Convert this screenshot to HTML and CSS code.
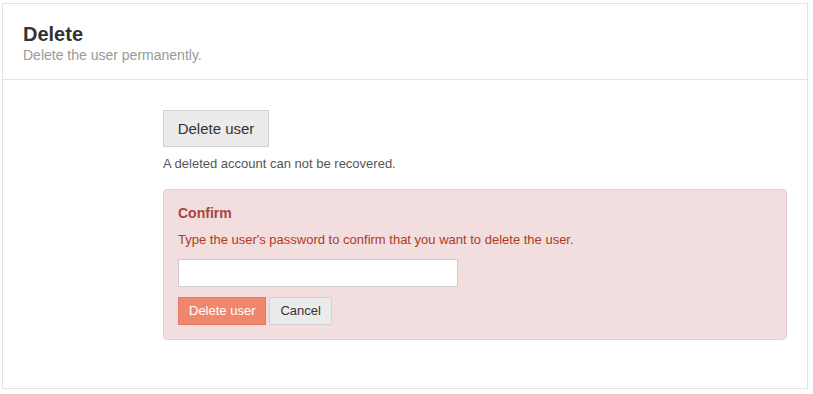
FILE: index.html
```html
<!DOCTYPE html>
<html lang="en">
<head>
    <meta charset="UTF-8">
    <title>Delete user</title>
    <link rel="stylesheet" href="styles.css">
</head>
<body>
    <div class="panel">
        <div class="panel-header">
            <h2>Delete</h2>
            <p class="subtitle">Delete the user permanently.</p>
        </div>
        <div class="panel-body">
            <button type="button" class="btn btn-default btn-large">Delete user</button>
            <p class="help-text">A deleted account can not be recovered.</p>

            <div class="confirm-box">
                <h4>Confirm</h4>
                <p>Type the user's password to confirm that you want to delete the user.</p>
                <input type="password" class="password-input">
                <div class="buttons">
                    <button type="button" class="btn btn-danger">Delete user</button>
                    <button type="button" class="btn btn-default">Cancel</button>
                </div>
            </div>
        </div>
    </div>
</body>
</html>
```

FILE: styles.css
```css
body {
    margin: 0;
    font-family: "Liberation Sans", Arial, sans-serif;
    color: #333;
    background: #fff;
}

.panel {
    margin: 3px 5px 0 2px;
    border: 1px solid #e3e3e3;
    height: 386px;
    box-sizing: border-box;
}

.panel-header {
    padding: 19px 20px 0 20px;
    height: 76px;
    box-sizing: border-box;
    border-bottom: 1px solid #e3e3e3;
}

.panel-header h2 {
    margin: 0;
    font-size: 20px;
    line-height: 22px;
    font-weight: bold;
    color: #333;
}

.subtitle {
    margin: 1px 0 0 0;
    font-size: 14px;
    line-height: 18px;
    color: #999;
}

.panel-body {
    padding: 30px 20px 0 160px;
}

.btn {
    font-family: "Liberation Sans", Arial, sans-serif;
    font-size: 13px;
    line-height: 16px;
    padding: 5px 10px;
    border: 1px solid #d2d2d2;
    border-radius: 0;
    white-space: nowrap;
    cursor: pointer;
}

.btn-default {
    background: #ebebeb;
    color: #333;
}

.btn-large {
    display: block;
    font-size: 15px;
    line-height: 19px;
    padding: 8px 0;
    width: 106px;
    height: 37px;
}

.btn-danger {
    background: #f0876d;
    border-color: #e8795f;
    color: #fff;
}

.help-text {
    margin: 8px 0 0 0;
    font-size: 13px;
    line-height: 18px;
    color: #555;
}

.confirm-box {
    margin-top: 16px;
    background: #f2dede;
    border: 1px solid #ebccd1;
    border-radius: 4px;
    padding: 14px 14px 13px 14px;
    color: #a94442;
    height: 151px;
    box-sizing: border-box;
}

.confirm-box h4 {
    margin: 0;
    font-size: 14px;
    line-height: 18px;
    font-weight: bold;
    color: #a94442;
}

.confirm-box p {
    margin: 9px 0 0 0;
    font-size: 13px;
    line-height: 18px;
    color: #b2381f;
}

.password-input {
    display: block;
    margin-top: 10px;
    width: 280px;
    height: 28px;
    box-sizing: border-box;
    border: 1px solid #ccc;
    background: #fff;
    padding: 4px 6px;
}

.buttons {
    display: flex;
    gap: 3px;
    margin-top: 10px;
}

.buttons .btn {
    height: 28px;
}
```
